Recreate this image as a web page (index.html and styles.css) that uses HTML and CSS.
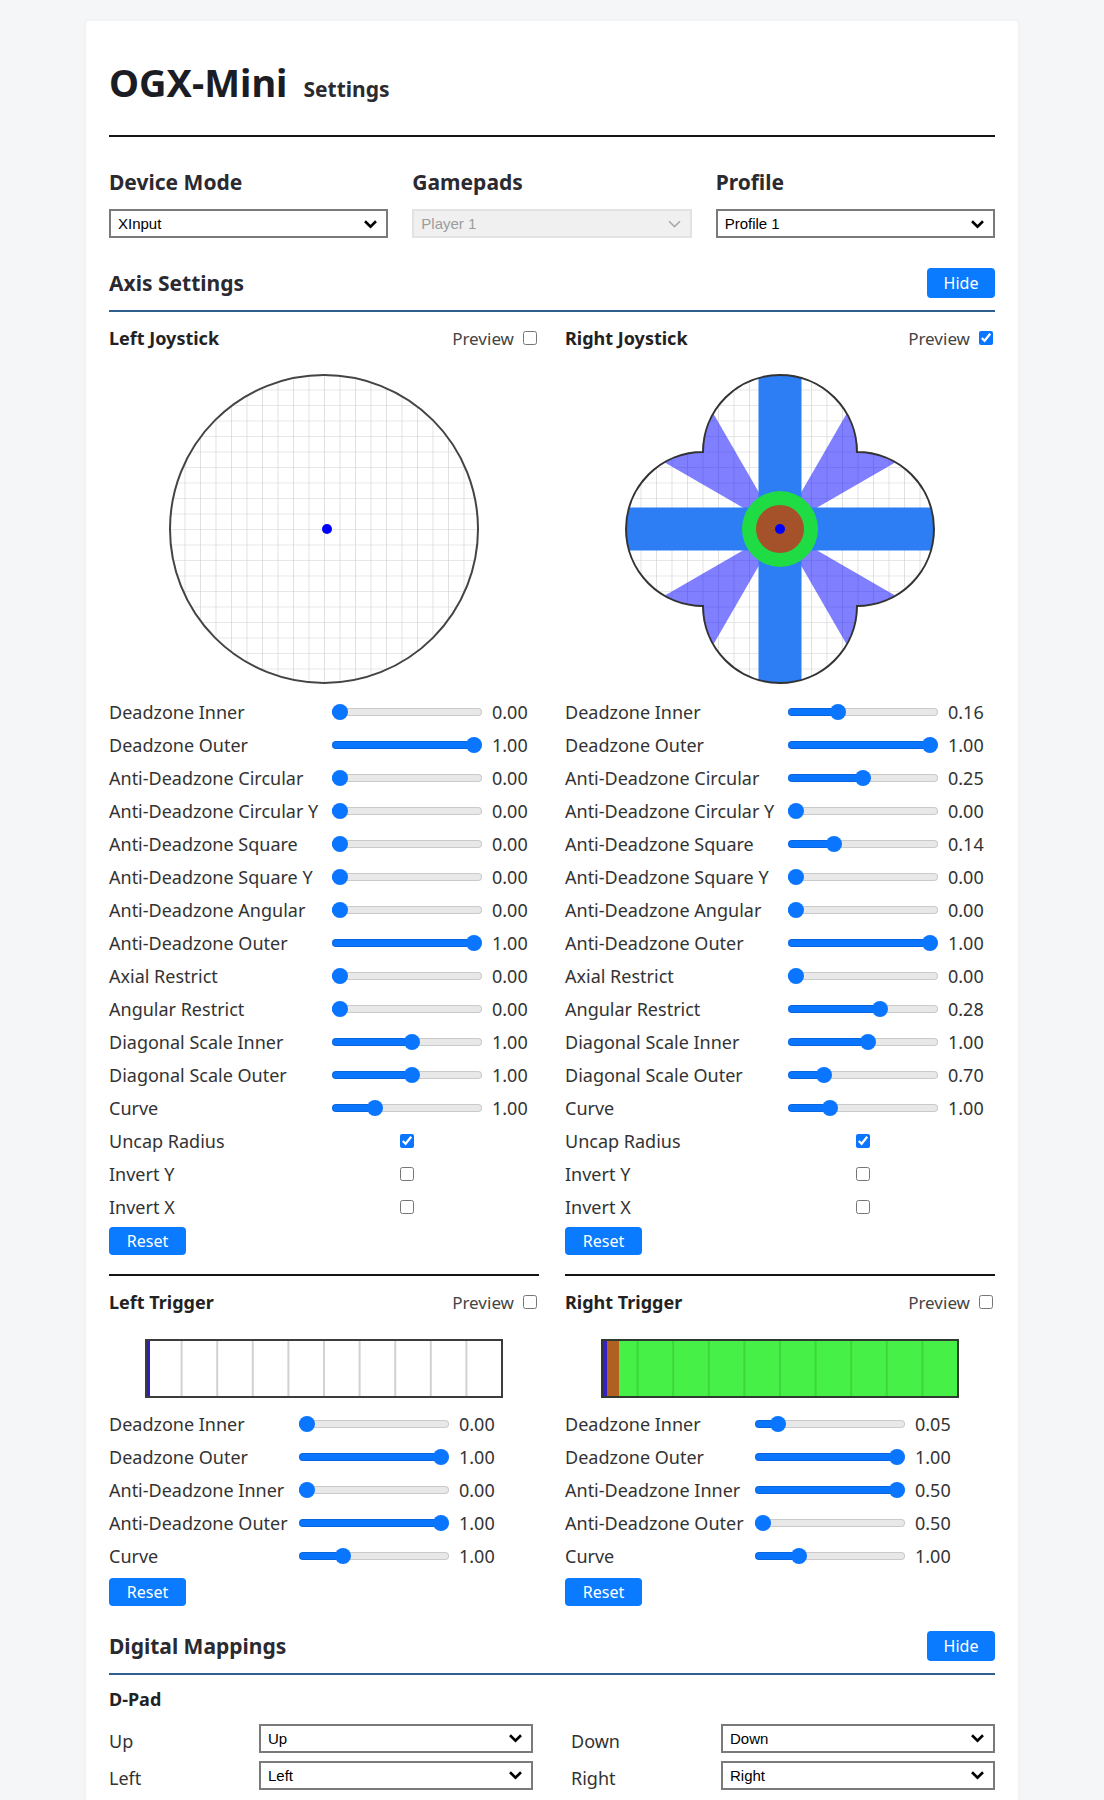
FILE: index.html
```html
<!DOCTYPE html>
<html lang="en">
<head>
<meta charset="utf-8">
<title>OGX-Mini Settings</title>
<link rel="stylesheet" href="styles.css">
</head>
<body>
<div class="card">
  <h1 class="title">OGX-Mini <span class="sub">Settings</span></h1>
  <div class="rule"></div>

  <div class="device-grid">
    <div class="field">
      <label class="field-label">Device Mode</label>
      <div class="select-wrap">
        <select><option>XInput</option></select>
        <svg class="chev" viewBox="0 0 15 10"><path d="M2 2.2 L7.5 7.6 L13 2.2" fill="none" stroke="#000" stroke-width="2.6"/></svg>
      </div>
    </div>
    <div class="field">
      <label class="field-label">Gamepads</label>
      <div class="select-wrap">
        <select disabled><option>Player 1</option></select>
        <svg class="chev" viewBox="0 0 15 10"><path d="M2 2.2 L7.5 7.6 L13 2.2" fill="none" stroke="#a9a9a9" stroke-width="1.6"/></svg>
      </div>
    </div>
    <div class="field">
      <label class="field-label">Profile</label>
      <div class="select-wrap">
        <select><option>Profile 1</option></select>
        <svg class="chev" viewBox="0 0 15 10"><path d="M2 2.2 L7.5 7.6 L13 2.2" fill="none" stroke="#000" stroke-width="2.6"/></svg>
      </div>
    </div>
  </div>

  <div class="section-head">
    <h2>Axis Settings</h2>
    <button class="btn">Hide</button>
  </div>
  <div class="section-rule"></div>

  <div class="two-col">
    <!-- Left Joystick -->
    <div class="joy-panel">
      <div class="panel-head">
        <h3>Left Joystick</h3>
        <label class="preview">Preview <input type="checkbox"></label>
      </div>
      <div class="stick">
        <svg width="310" height="310" viewBox="0 0 310 310">
          <defs>
            <pattern id="gridL" width="15.5" height="15.5" patternUnits="userSpaceOnUse"><path d="M15.5 0H0V15.5" fill="none" stroke="#cfcfcf" stroke-width="1.2"/></pattern>
            <clipPath id="clipL"><circle cx="155" cy="155" r="154"/></clipPath>
          </defs>
          <g clip-path="url(#clipL)">
            <rect width="310" height="310" fill="#fff"/>
            <rect width="310" height="310" fill="url(#gridL)"/>
          </g>
          <circle cx="155" cy="155" r="154" fill="none" stroke="#444" stroke-width="2"/>
          <circle cx="158" cy="155" r="5" fill="#0000ff"/>
        </svg>
      </div>
      <div class="rows">
        <span>Deadzone Inner</span><input class="slider" type="range" min="0" max="1" step="0.001" value="0" style="--v:0"><span>0.00</span>
        <span>Deadzone Outer</span><input class="slider" type="range" min="0" max="1" step="0.001" value="1" style="--v:1"><span>1.00</span>
        <span>Anti-Deadzone Circular</span><input class="slider" type="range" min="0" max="1" step="0.001" value="0" style="--v:0"><span>0.00</span>
        <span>Anti-Deadzone Circular Y</span><input class="slider" type="range" min="0" max="1" step="0.001" value="0" style="--v:0"><span>0.00</span>
        <span>Anti-Deadzone Square</span><input class="slider" type="range" min="0" max="1" step="0.001" value="0" style="--v:0"><span>0.00</span>
        <span>Anti-Deadzone Square Y</span><input class="slider" type="range" min="0" max="1" step="0.001" value="0" style="--v:0"><span>0.00</span>
        <span>Anti-Deadzone Angular</span><input class="slider" type="range" min="0" max="1" step="0.001" value="0" style="--v:0"><span>0.00</span>
        <span>Anti-Deadzone Outer</span><input class="slider" type="range" min="0" max="1" step="0.001" value="1" style="--v:1"><span>1.00</span>
        <span>Axial Restrict</span><input class="slider" type="range" min="0" max="1" step="0.001" value="0" style="--v:0"><span>0.00</span>
        <span>Angular Restrict</span><input class="slider" type="range" min="0" max="1" step="0.001" value="0" style="--v:0"><span>0.00</span>
        <span>Diagonal Scale Inner</span><input class="slider" type="range" min="0" max="1" step="0.001" value="0.54" style="--v:0.54"><span>1.00</span>
        <span>Diagonal Scale Outer</span><input class="slider" type="range" min="0" max="1" step="0.001" value="0.54" style="--v:0.54"><span>1.00</span>
        <span>Curve</span><input class="slider" type="range" min="0" max="1" step="0.001" value="0.26" style="--v:0.26"><span>1.00</span>
        <span>Uncap Radius</span><input class="check-cell" type="checkbox" checked><span></span>
        <span>Invert Y</span><input class="check-cell" type="checkbox"><span></span>
        <span>Invert X</span><input class="check-cell" type="checkbox"><span></span>
      </div>
      <button class="btn reset">Reset</button>
    </div>

    <!-- Right Joystick -->
    <div class="joy-panel">
      <div class="panel-head">
        <h3>Right Joystick</h3>
        <label class="preview">Preview <input type="checkbox" checked></label>
      </div>
      <div class="stick">
        <svg width="310" height="310" viewBox="0 0 310 310">
          <defs>
            <pattern id="gridR" width="15.5" height="15.5" patternUnits="userSpaceOnUse"><path d="M15.5 0H0V15.5" fill="none" stroke="#cfcfcf" stroke-width="1.2"/></pattern>
            <clipPath id="clipR"><path d="M78 78A77 77 0 0 1 232 78A77 77 0 0 1 232 232A77 77 0 0 1 78 232A77 77 0 0 1 78 78Z"/></clipPath>
          </defs>
          <g clip-path="url(#clipR)">
            <rect width="310" height="310" fill="#fff"/>
            <rect width="310" height="310" fill="url(#gridR)"/>
            <g fill="#0000ff" fill-opacity="0.5">
              <polygon points="155,155 371.5,30 280,-61.5"/>
              <polygon points="155,155 -61.5,30 30,-61.5"/>
              <polygon points="155,155 371.5,280 280,371.5"/>
              <polygon points="155,155 -61.5,280 30,371.5"/>
            </g>
            <rect x="133.5" y="0" width="43" height="310" fill="#2d7df4"/>
            <rect x="0" y="133.5" width="310" height="43" fill="#2d7df4"/>
          </g>
          <circle cx="155" cy="155" r="38" fill="#1fdc45"/>
          <circle cx="155" cy="155" r="24" fill="#a5522a"/>
          <circle cx="155" cy="155" r="5" fill="#0000ff"/>
          <path d="M78 78A77 77 0 0 1 232 78A77 77 0 0 1 232 232A77 77 0 0 1 78 232A77 77 0 0 1 78 78Z" fill="none" stroke="#333" stroke-width="2"/>
        </svg>
      </div>
      <div class="rows">
        <span>Deadzone Inner</span><input class="slider" type="range" min="0" max="1" step="0.001" value="0.316" style="--v:0.316"><span>0.16</span>
        <span>Deadzone Outer</span><input class="slider" type="range" min="0" max="1" step="0.001" value="1" style="--v:1"><span>1.00</span>
        <span>Anti-Deadzone Circular</span><input class="slider" type="range" min="0" max="1" step="0.001" value="0.5" style="--v:0.5"><span>0.25</span>
        <span>Anti-Deadzone Circular Y</span><input class="slider" type="range" min="0" max="1" step="0.001" value="0" style="--v:0"><span>0.00</span>
        <span>Anti-Deadzone Square</span><input class="slider" type="range" min="0" max="1" step="0.001" value="0.28" style="--v:0.28"><span>0.14</span>
        <span>Anti-Deadzone Square Y</span><input class="slider" type="range" min="0" max="1" step="0.001" value="0" style="--v:0"><span>0.00</span>
        <span>Anti-Deadzone Angular</span><input class="slider" type="range" min="0" max="1" step="0.001" value="0" style="--v:0"><span>0.00</span>
        <span>Anti-Deadzone Outer</span><input class="slider" type="range" min="0" max="1" step="0.001" value="1" style="--v:1"><span>1.00</span>
        <span>Axial Restrict</span><input class="slider" type="range" min="0" max="1" step="0.001" value="0" style="--v:0"><span>0.00</span>
        <span>Angular Restrict</span><input class="slider" type="range" min="0" max="1" step="0.001" value="0.63" style="--v:0.63"><span>0.28</span>
        <span>Diagonal Scale Inner</span><input class="slider" type="range" min="0" max="1" step="0.001" value="0.54" style="--v:0.54"><span>1.00</span>
        <span>Diagonal Scale Outer</span><input class="slider" type="range" min="0" max="1" step="0.001" value="0.21" style="--v:0.21"><span>0.70</span>
        <span>Curve</span><input class="slider" type="range" min="0" max="1" step="0.001" value="0.25" style="--v:0.25"><span>1.00</span>
        <span>Uncap Radius</span><input class="check-cell" type="checkbox" checked><span></span>
        <span>Invert Y</span><input class="check-cell" type="checkbox"><span></span>
        <span>Invert X</span><input class="check-cell" type="checkbox"><span></span>
      </div>
      <button class="btn reset">Reset</button>
    </div>

    <!-- Left Trigger -->
    <div class="trig-panel">
      <div class="panel-head">
        <h3>Left Trigger</h3>
        <label class="preview">Preview <input type="checkbox"></label>
      </div>
      <div class="tbar">
        <svg width="358" height="59" viewBox="0 0 358 59">
          <rect x="1" y="1" width="356" height="57" fill="#fff"/>
          <g stroke="#d2d2d2" stroke-width="2">
            <line x1="36.6" y1="2" x2="36.6" y2="57"/><line x1="72.2" y1="2" x2="72.2" y2="57"/>
            <line x1="107.8" y1="2" x2="107.8" y2="57"/><line x1="143.4" y1="2" x2="143.4" y2="57"/>
            <line x1="179" y1="2" x2="179" y2="57"/><line x1="214.6" y1="2" x2="214.6" y2="57"/>
            <line x1="250.2" y1="2" x2="250.2" y2="57"/><line x1="285.8" y1="2" x2="285.8" y2="57"/>
            <line x1="321.4" y1="2" x2="321.4" y2="57"/>
          </g>
          <rect x="2" y="2" width="3" height="55" fill="#2a1fc8"/>
          <rect x="1" y="1" width="356" height="57" fill="none" stroke="#3c3c3c" stroke-width="2"/>
        </svg>
      </div>
      <div class="rows trig">
        <span>Deadzone Inner</span><input class="slider" type="range" min="0" max="1" step="0.001" value="0" style="--v:0"><span>0.00</span>
        <span>Deadzone Outer</span><input class="slider" type="range" min="0" max="1" step="0.001" value="1" style="--v:1"><span>1.00</span>
        <span>Anti-Deadzone Inner</span><input class="slider" type="range" min="0" max="1" step="0.001" value="0" style="--v:0"><span>0.00</span>
        <span>Anti-Deadzone Outer</span><input class="slider" type="range" min="0" max="1" step="0.001" value="1" style="--v:1"><span>1.00</span>
        <span>Curve</span><input class="slider" type="range" min="0" max="1" step="0.001" value="0.27" style="--v:0.27"><span>1.00</span>
      </div>
      <button class="btn reset trig-reset">Reset</button>
    </div>

    <!-- Right Trigger -->
    <div class="trig-panel">
      <div class="panel-head">
        <h3>Right Trigger</h3>
        <label class="preview">Preview <input type="checkbox"></label>
      </div>
      <div class="tbar">
        <svg width="358" height="59" viewBox="0 0 358 59">
          <rect x="1" y="1" width="356" height="57" fill="#47f047"/>
          <g stroke="#3bd83b" stroke-width="2">
            <line x1="36.6" y1="2" x2="36.6" y2="57"/><line x1="72.2" y1="2" x2="72.2" y2="57"/>
            <line x1="107.8" y1="2" x2="107.8" y2="57"/><line x1="143.4" y1="2" x2="143.4" y2="57"/>
            <line x1="179" y1="2" x2="179" y2="57"/><line x1="214.6" y1="2" x2="214.6" y2="57"/>
            <line x1="250.2" y1="2" x2="250.2" y2="57"/><line x1="285.8" y1="2" x2="285.8" y2="57"/>
            <line x1="321.4" y1="2" x2="321.4" y2="57"/>
          </g>
          <rect x="2" y="2" width="16" height="55" fill="#b0601f"/>
          <rect x="2" y="2" width="4" height="55" fill="#3a1fc0"/>
          <rect x="1" y="1" width="356" height="57" fill="none" stroke="#2f3a2f" stroke-width="2"/>
        </svg>
      </div>
      <div class="rows trig">
        <span>Deadzone Inner</span><input class="slider" type="range" min="0" max="1" step="0.001" value="0.11" style="--v:0.11"><span>0.05</span>
        <span>Deadzone Outer</span><input class="slider" type="range" min="0" max="1" step="0.001" value="1" style="--v:1"><span>1.00</span>
        <span>Anti-Deadzone Inner</span><input class="slider" type="range" min="0" max="1" step="0.001" value="1" style="--v:1"><span>0.50</span>
        <span>Anti-Deadzone Outer</span><input class="slider" type="range" min="0" max="1" step="0.001" value="0" style="--v:0"><span>0.50</span>
        <span>Curve</span><input class="slider" type="range" min="0" max="1" step="0.001" value="0.27" style="--v:0.27"><span>1.00</span>
      </div>
      <button class="btn reset trig-reset">Reset</button>
    </div>
  </div>

  <div class="section-head digital-head">
    <h2>Digital Mappings</h2>
    <button class="btn">Hide</button>
  </div>
  <div class="section-rule"></div>

  <h3 class="group-title">D-Pad</h3>
  <div class="map-grid">
    <div class="map-col">
      <span class="map-label">Up</span>
      <div class="select-wrap">
        <select><option>Up</option></select>
        <svg class="chev" viewBox="0 0 15 10"><path d="M2 2.2 L7.5 7.6 L13 2.2" fill="none" stroke="#000" stroke-width="2.6"/></svg>
      </div>
      <span class="map-label">Left</span>
      <div class="select-wrap">
        <select><option>Left</option></select>
        <svg class="chev" viewBox="0 0 15 10"><path d="M2 2.2 L7.5 7.6 L13 2.2" fill="none" stroke="#000" stroke-width="2.6"/></svg>
      </div>
    </div>
    <div class="map-col">
      <span class="map-label">Down</span>
      <div class="select-wrap">
        <select><option>Down</option></select>
        <svg class="chev" viewBox="0 0 15 10"><path d="M2 2.2 L7.5 7.6 L13 2.2" fill="none" stroke="#000" stroke-width="2.6"/></svg>
      </div>
      <span class="map-label">Right</span>
      <div class="select-wrap">
        <select><option>Right</option></select>
        <svg class="chev" viewBox="0 0 15 10"><path d="M2 2.2 L7.5 7.6 L13 2.2" fill="none" stroke="#000" stroke-width="2.6"/></svg>
      </div>
    </div>
  </div>
</div>
</body>
</html>
```

FILE: styles.css
```css
* { box-sizing: border-box; }

body {
  margin: 0;
  background: #f5f6f8;
  font-family: "Noto Sans", "Open Sans", sans-serif;
  color: #222;
}

.card {
  width: 932px;
  margin: 21px auto 0;
  background: #fff;
  padding: 38px 23px 120px;
  border-radius: 4px;
  box-shadow: 0 0 5px rgba(0, 0, 0, 0.04);
}

.title {
  margin: 0;
  display: flex;
  align-items: baseline;
  gap: 16px;
  font-size: 38px;
  line-height: 46px;
  font-weight: 700;
  color: #1c1c24;
}

.title .sub {
  font-size: 21px;
  font-weight: 700;
  color: #2a2a30;
}

.rule {
  height: 2px;
  background: #141414;
  margin-top: 23px;
}

.device-grid {
  display: grid;
  grid-template-columns: repeat(3, 1fr);
  column-gap: 24px;
  margin-top: 32px;
}

.field-label {
  display: block;
  font-size: 21px;
  line-height: 26px;
  font-weight: 700;
  color: #2a2a30;
  margin-bottom: 14px;
}

.select-wrap {
  position: relative;
}

.select-wrap select {
  display: block;
  width: 100%;
  height: 29px;
  -webkit-appearance: none;
  appearance: none;
  border: 2px solid #7a7a7a;
  border-radius: 0;
  background: #fff;
  font-family: "Liberation Sans", Arial, sans-serif;
  font-size: 15px;
  color: #000;
  padding: 0 30px 0 7px;
}

.select-wrap select:disabled {
  background: #f0f0f0;
  border-color: #e3e3e3;
  color: #9c9c9c;
  opacity: 1;
}

.select-wrap .chev {
  position: absolute;
  right: 10px;
  top: 50%;
  margin-top: -5px;
  width: 15px;
  height: 10px;
  pointer-events: none;
}

.section-head {
  display: flex;
  justify-content: space-between;
  align-items: center;
  height: 30px;
  margin-top: 30px;
}

.section-head h2 {
  margin: 0;
  font-size: 21px;
  line-height: 26px;
  font-weight: 700;
  color: #2a2a30;
}

.digital-head {
  margin-top: 25px;
}

.btn {
  display: block;
  width: 68px;
  height: 30px;
  padding: 0;
  border: none;
  border-radius: 4px;
  background: #0a7bff;
  color: #fff;
  font-family: inherit;
  font-size: 16px;
}

.section-rule {
  height: 2px;
  background: #2f5f8f;
  margin-top: 12px;
}

.two-col {
  display: grid;
  grid-template-columns: 1fr 1fr;
  column-gap: 26px;
}

.joy-panel {
  padding-top: 14px;
}

.panel-head {
  display: flex;
  justify-content: space-between;
  align-items: center;
  height: 24px;
}

.panel-head h3 {
  margin: 0;
  font-size: 18px;
  font-weight: 700;
  color: #222;
}

.preview {
  display: flex;
  align-items: center;
  gap: 9px;
  font-size: 17px;
  color: #444;
  padding-right: 2px;
}

.preview input,
.check-cell {
  width: 14px;
  height: 14px;
  margin: 0;
  accent-color: #0a75ff;
}

.stick {
  display: flex;
  justify-content: center;
  margin-top: 24px;
}

.stick svg,
.tbar svg {
  display: block;
}

.rows {
  display: grid;
  grid-template-columns: 213px 150px auto;
  column-gap: 10px;
  grid-auto-rows: 33px;
  align-items: center;
  margin-top: 11px;
  font-size: 18px;
  color: #333;
  white-space: nowrap;
}

.rows.trig {
  grid-template-columns: 180px 150px auto;
  margin-top: 9px;
}

.check-cell {
  justify-self: center;
}

.slider {
  -webkit-appearance: none;
  appearance: none;
  width: 150px;
  height: 16px;
  margin: 0;
  padding: 0;
  background: transparent;
}

.slider::-webkit-slider-runnable-track {
  height: 8px;
  border-radius: 4px;
  background: linear-gradient(to right, #0a75ff calc(8px + 134px * var(--v)), #e8e8e8 calc(8px + 134px * var(--v)));
  box-shadow: inset 0 0 0 1px rgba(0, 0, 0, 0.13);
}

.slider::-webkit-slider-thumb {
  -webkit-appearance: none;
  appearance: none;
  width: 16px;
  height: 16px;
  margin-top: -4px;
  border: none;
  border-radius: 50%;
  background: #0a75ff;
}

.reset {
  width: 77px;
  height: 28px;
  margin-top: 4px;
}

.trig-reset {
  margin-top: 6px;
}

.trig-panel {
  margin-top: 19px;
  padding-top: 14px;
  border-top: 2px solid #141414;
}

.tbar {
  display: flex;
  justify-content: center;
  margin-top: 25px;
}

.group-title {
  margin: 12px 0 0;
  font-size: 18px;
  line-height: 24px;
  font-weight: 700;
  color: #222;
}

.map-grid {
  display: grid;
  grid-template-columns: 1fr 1fr;
  column-gap: 38px;
  margin-top: 12px;
}

.map-col {
  display: grid;
  grid-template-columns: 150px 1fr;
  row-gap: 7px;
  align-items: center;
}

.map-label {
  font-size: 18px;
  color: #333;
  padding-top: 6px;
}
```
